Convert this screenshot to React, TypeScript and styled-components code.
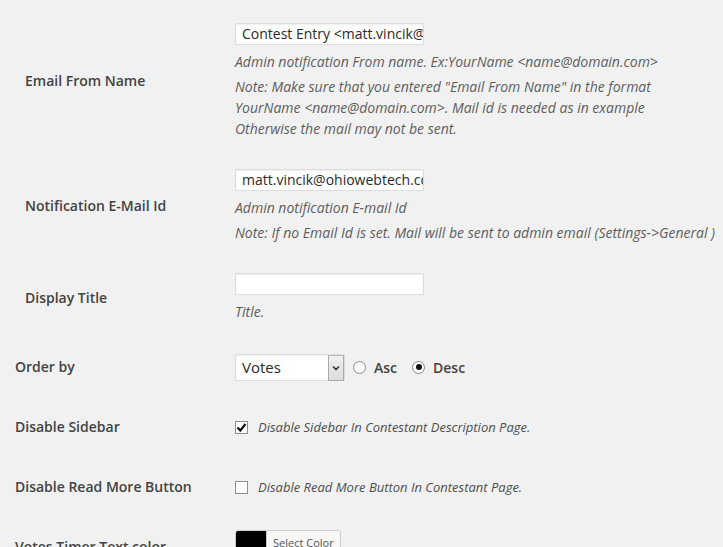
import styled, { createGlobalStyle } from "styled-components";

const GlobalStyle = createGlobalStyle`
  html, body {
    margin: 0;
    padding: 0;
    background: #f1f1f1;
    font-family: "Open Sans", "Liberation Sans", sans-serif;
    color: #444;
  }
`;

function Chevron() {
  return (
    <svg width="8" height="6" viewBox="0 0 8 6">
      <path d="M1 1.5 L4 4.5 L7 1.5" fill="none" stroke="#333" strokeWidth="1.6" />
    </svg>
  );
}

function Check() {
  return (
    <svg width="11" height="11" viewBox="0 0 11 11">
      <path d="M1.5 5.5 L4.3 8.5 L9.5 2" fill="none" stroke="#111" strokeWidth="2.2" />
    </svg>
  );
}

function App() {
  return (
    <>
      <GlobalStyle />
      <Page>
        <Row>
          <Label $indent>Email From Name</Label>
          <Field>
            <TextInput>Contest Entry &lt;matt.vincik@ohiowebtech.com&gt;</TextInput>
            <Desc>Admin notification From name. Ex:YourName &lt;name@domain.com&gt;</Desc>
            <Note>
              Note: Make sure that you entered "Email From Name" in the format
              <br />
              YourName &lt;name@domain.com&gt;. Mail id is needed as in example
              <br />
              Otherwise the mail may not be sent.
            </Note>
          </Field>
        </Row>

        <Row>
          <Label $indent>Notification E-Mail Id</Label>
          <Field>
            <TextInput>matt.vincik@ohiowebtech.com</TextInput>
            <Desc>Admin notification E-mail Id</Desc>
            <Note>Note: If no Email Id is set. Mail will be sent to admin email (Settings-&gt;General )</Note>
          </Field>
        </Row>

        <Row>
          <Label $indent>Display Title</Label>
          <Field>
            <TextInput />
            <Desc>Title.</Desc>
          </Field>
        </Row>

        <Row>
          <Label>Order by</Label>
          <Field>
            <Inline>
              <SelectBox>
                <SelectValue>Votes</SelectValue>
                <SelectArrow>
                  <Chevron />
                </SelectArrow>
              </SelectBox>
              <RadioOption>
                <Radio />
                Asc
              </RadioOption>
              <RadioOption>
                <Radio $checked />
                Desc
              </RadioOption>
            </Inline>
          </Field>
        </Row>

        <Row>
          <Label>Disable Sidebar</Label>
          <Field>
            <Inline>
              <CheckBox>
                <Check />
              </CheckBox>
              <CheckText>Disable Sidebar In Contestant Description Page.</CheckText>
            </Inline>
          </Field>
        </Row>

        <Row>
          <Label>Disable Read More Button</Label>
          <Field>
            <Inline>
              <CheckBox />
              <CheckText>Disable Read More Button In Contestant Page.</CheckText>
            </Inline>
          </Field>
        </Row>

        <Row>
          <Label>Votes Timer Text color</Label>
          <Field $top>
            <ColorButton>
              <Swatch $color="#000" />
              <ColorText>Select Color</ColorText>
            </ColorButton>
          </Field>
        </Row>
      </Page>
    </>
  );
}

export default App;

const Page = styled.div`
  padding: 8px 0 0 15px;
  height: 547px;
  box-sizing: border-box;
  overflow: hidden;
`;

const Row = styled.div`
  display: grid;
  grid-template-columns: 220px 1fr;
  align-items: center;
`;

const Label = styled.div<{ $indent?: boolean }>`
  padding: 20px 0 20px ${(p) => (p.$indent ? "10px" : "0")};
  line-height: 20px;
  font-size: 14px;
  font-weight: 600;
  color: #434343;
`;

const Field = styled.div<{ $top?: boolean }>`
  padding: ${(p) => (p.$top ? "13px 0 0" : "15px 0")};
  align-self: ${(p) => (p.$top ? "start" : "center")};
  font-size: 14px;
`;

const TextInput = styled.div`
  box-sizing: border-box;
  width: 189px;
  height: 22px;
  padding: 0 6px;
  background: #fff;
  border: 1px solid #ddd;
  box-shadow: inset 0 1px 2px rgba(0, 0, 0, 0.07);
  color: #2a2a2a;
  font-size: 14px;
  line-height: 20px;
  white-space: nowrap;
  overflow: hidden;
  text-overflow: clip;
`;

const Desc = styled.p`
  margin: 6px 0 0;
  line-height: 21px;
  font-style: italic;
  color: #5e5e5e;
  white-space: nowrap;
`;

const Note = styled(Desc)`
  margin-top: 4px;
`;

const Inline = styled.div`
  display: flex;
  align-items: center;
`;

const SelectBox = styled.div`
  box-sizing: border-box;
  display: flex;
  align-items: stretch;
  width: 110px;
  height: 27px;
  background: #fff;
  border: 1px solid #ddd;
  box-shadow: inset 0 1px 2px rgba(0, 0, 0, 0.07);
`;

const SelectValue = styled.div`
  flex: 1;
  padding-left: 6px;
  line-height: 25px;
  font-size: 15px;
  color: #2a2a2a;
`;

const SelectArrow = styled.div`
  box-sizing: border-box;
  width: 16px;
  margin: 0 0 -1px;
  display: flex;
  align-items: center;
  justify-content: center;
  background: linear-gradient(#f0f0f0, #dcdcdc);
  border: 1px solid #a9a9a9;
  border-top-color: #bbb;
`;

const RadioOption = styled.label`
  display: flex;
  align-items: center;
  gap: 8px;
  margin-left: 8px;
  font-weight: 600;
  font-size: 14px;
  color: #434343;
  & + & {
    margin-left: 15px;
  }
`;

const Radio = styled.span<{ $checked?: boolean }>`
  box-sizing: border-box;
  width: 13px;
  height: 13px;
  border-radius: 50%;
  border: 1px solid #8a8a8a;
  background: #fff;
  display: flex;
  align-items: center;
  justify-content: center;
  &::after {
    content: "";
    width: 6px;
    height: 6px;
    border-radius: 50%;
    background: ${(p) => (p.$checked ? "#111" : "transparent")};
  }
`;

const CheckBox = styled.span`
  box-sizing: border-box;
  width: 13px;
  height: 13px;
  border: 1px solid #8f8f8f;
  background: #fff;
  display: flex;
  align-items: center;
  justify-content: center;
`;

const CheckText = styled.span`
  margin-left: 10px;
  font-style: italic;
  font-size: 13px;
  color: #4e4e4e;
`;

const ColorButton = styled.div`
  display: inline-flex;
  height: 24px;
  border: 1px solid #ccc;
  border-radius: 3px;
  overflow: hidden;
  background: #f7f7f7;
  box-shadow: 0 1px 0 #ccc;
`;

const Swatch = styled.span<{ $color: string }>`
  width: 30px;
  background: ${(p) => p.$color};
`;

const ColorText = styled.span`
  padding: 0 6px;
  line-height: 24px;
  font-size: 11px;
  color: #555;
  border-left: 1px solid #ccc;
  background: #f7f7f7;
`;
